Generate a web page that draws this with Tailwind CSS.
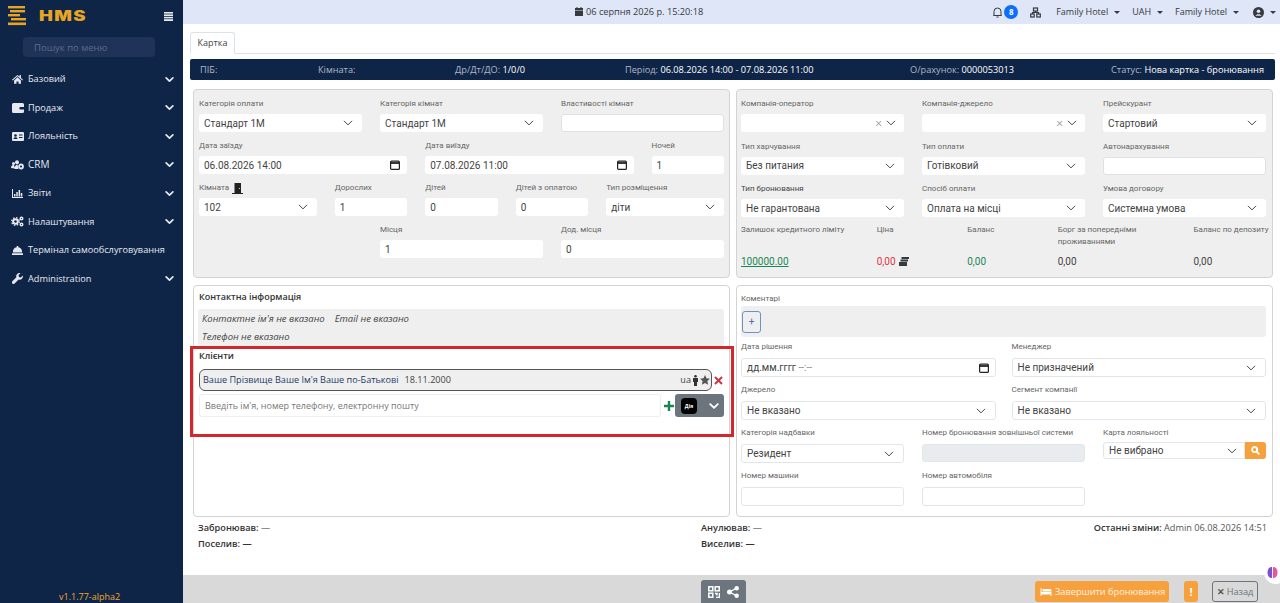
<!DOCTYPE html>
<html lang="uk"><head><meta charset="utf-8"><title>HMS</title>
<script src="https://cdn.jsdelivr.net/npm/@tailwindcss/browser@4"></script></head>
<body class="font-['Open_Sans',sans-serif] bg-white text-[#444]">
<div class="relative flex h-[603px] w-[1280px] overflow-hidden">
<aside class="w-[183px] shrink-0 bg-[#0f2548] text-[#e6e9ef] flex flex-col">
  <div class="h-[32px] flex items-center pl-[8px] pr-[10px]">
    <svg class="w-[18px] h-[20px]" viewBox="0 0 18 20" fill="#e8a524"><rect x="0" y="0" width="17" height="2.4"/><rect x="2" y="4" width="15" height="2.4"/><rect x="0" y="8" width="12" height="2.4"/><rect x="3" y="12" width="15" height="2.4"/><rect x="0" y="16.5" width="18" height="2.6"/></svg>
    <span class="ml-[13px] inline-block origin-left scale-x-[1.32] text-[14px] leading-none font-black tracking-[1px] text-[#e8a524] font-['Inter',sans-serif]">HMS</span>
    <svg class="ml-auto w-[9px] h-[9px]" viewBox="0 0 9 9" fill="#e6e9ef"><rect width="9" height="1.6"/><rect y="2.4" width="9" height="1.6"/><rect y="4.8" width="9" height="1.6"/><rect y="7.2" width="9" height="1.8"/></svg>
  </div>
  <div class="mt-[5px] ml-[23px] w-[132px] h-[20px] rounded-[4px] bg-[#1f3358] pl-[11px] text-[9.500px] leading-[22px] text-[#5d6c88]">Пошук по меню</div>
  <nav class="mt-[8px] flex flex-col text-[9.200px]">
    <div class="h-[28.5px] flex items-center pl-[12px] pr-[9px] gap-[5px]"><svg class="w-[11px] h-[10px]" viewBox="0 0 16 14" fill="#e6e9ef"><path d="M8 1 0 8l1 1 7-6 7 6 1-1-3-2.6V1h-2v2.700zM3 9l5-4.400L13 9v5H9.500v-3.500h-3V14H3z"/></svg><span>Базовий</span><svg class="ml-auto w-[9px] h-[9px]" viewBox="0 0 16 16" fill="none" stroke="#e6e9ef" stroke-width="3" stroke-linecap="round" stroke-linejoin="round"><path d="m2 5 6 6 6-6"/></svg></div>
    <div class="h-[28.5px] flex items-center pl-[12px] pr-[9px] gap-[4px]"><svg class="w-[12px] h-[10px]" viewBox="0 0 12 10" fill="#e6e9ef"><path d="M1.500 0h9A1.500 1.500 0 0 1 12 1.500V4H8.500a1.200 1.200 0 0 0 0 2.400H12v2.100A1.500 1.500 0 0 1 10.500 10h-9A1.500 1.500 0 0 1 0 8.500v-7A1.500 1.500 0 0 1 1.500 0z"/></svg><span>Продаж</span><svg class="ml-auto w-[9px] h-[9px]" viewBox="0 0 16 16" fill="none" stroke="#e6e9ef" stroke-width="3" stroke-linecap="round" stroke-linejoin="round"><path d="m2 5 6 6 6-6"/></svg></div>
    <div class="h-[28.5px] flex items-center pl-[12px] pr-[9px] gap-[4px]"><svg class="w-[12px] h-[9px]" viewBox="0 0 12 9" fill="#e6e9ef"><path d="M1 0h10a1 1 0 0 1 1 1v7a1 1 0 0 1-1 1H1a1 1 0 0 1-1-1V1a1 1 0 0 1 1-1z"/><circle cx="3.500" cy="3.500" r="1.300" fill="#0f2548"/><path d="M1.500 7c0-2.500 4-2.500 4 0zM7 2.500h3.500v1H7zM7 5h3.500v1H7z" fill="#0f2548"/></svg><span>Лояльність</span><svg class="ml-auto w-[9px] h-[9px]" viewBox="0 0 16 16" fill="none" stroke="#e6e9ef" stroke-width="3" stroke-linecap="round" stroke-linejoin="round"><path d="m2 5 6 6 6-6"/></svg></div>
    <div class="h-[28.5px] flex items-center pl-[11px] pr-[9px] gap-[4px]"><svg class="w-[13px] h-[10px]" viewBox="0 0 13 10" fill="#e6e9ef"><circle cx="2.500" cy="3.500" r="1.500"/><circle cx="6" cy="2.200" r="2"/><path d="M0 8c0-2.500 1.500-3 3-3l1 3.500zM3.500 9c0-3 1.500-4.500 3-4.500l1 4.500z"/><circle cx="10" cy="6.500" r="2" fill="none" stroke="#e6e9ef" stroke-width="1.800"/></svg><span class="text-[10px]">CRM</span><svg class="ml-auto w-[9px] h-[9px]" viewBox="0 0 16 16" fill="none" stroke="#e6e9ef" stroke-width="3" stroke-linecap="round" stroke-linejoin="round"><path d="m2 5 6 6 6-6"/></svg></div>
    <div class="h-[28.5px] flex items-center pl-[12px] pr-[9px] gap-[5px]"><svg class="w-[11px] h-[9px]" viewBox="0 0 11 9" fill="#e6e9ef"><path d="M0 0h1v8h10v1H0zM2 5h1.500v2.500H2zM4.300 3h1.500v4.500H4.300zM6.600 1h1.500v6.500H6.600zM8.800 4h1.500v3.500H8.800z"/></svg><span>Звіти</span><svg class="ml-auto w-[9px] h-[9px]" viewBox="0 0 16 16" fill="none" stroke="#e6e9ef" stroke-width="3" stroke-linecap="round" stroke-linejoin="round"><path d="m2 5 6 6 6-6"/></svg></div>
    <div class="h-[28.5px] flex items-center pl-[11px] pr-[9px] gap-[4px]"><svg class="w-[13px] h-[11px]" viewBox="0 0 13 11" fill="none" stroke="#e6e9ef"><circle cx="4.500" cy="5.500" r="2.300" stroke-width="2"/><circle cx="4.500" cy="5.500" r="3.800" stroke-width="1.400" stroke-dasharray="1.500 1.500"/><circle cx="10.500" cy="2.500" r="1.300" stroke-width="1.400"/><circle cx="10.500" cy="8.500" r="1.300" stroke-width="1.400"/></svg><span>Налаштування</span><svg class="ml-auto w-[9px] h-[9px]" viewBox="0 0 16 16" fill="none" stroke="#e6e9ef" stroke-width="3" stroke-linecap="round" stroke-linejoin="round"><path d="m2 5 6 6 6-6"/></svg></div>
    <div class="h-[28.5px] flex items-center pl-[12px] gap-[5px]"><svg class="w-[11px] h-[9px]" viewBox="0 0 11 9" fill="#e6e9ef"><path d="M4.700 0h1.600v1.200A4.500 4.500 0 0 1 10 6.500H1a4.500 4.500 0 0 1 3.700-5.300zM0 7.300h11V9H0z"/></svg><span class="whitespace-nowrap">Термінал самообслуговування</span></div>
    <div class="h-[28.5px] flex items-center pl-[12px] pr-[9px] gap-[5px]"><svg class="w-[11px] h-[11px]" viewBox="0 0 11 11" fill="#e6e9ef"><path d="M10.800 2.500 8.900 4.400 6.900 4 6.500 2 8.500.2a3.200 3.200 0 0 0-4.100 4L.4 8.200a1.400 1.400 0 0 0 2.200 2.200l4-4a3.200 3.200 0 0 0 4.200-3.900z"/></svg><span>Administration</span><svg class="ml-auto w-[9px] h-[9px]" viewBox="0 0 16 16" fill="none" stroke="#e6e9ef" stroke-width="3" stroke-linecap="round" stroke-linejoin="round"><path d="m2 5 6 6 6-6"/></svg></div>
  </nav>
  <div class="mt-auto pl-[59px] text-[9px] leading-[12px] text-[#f0a92a]">v1.1.77-alpha2</div>
</aside>

<div class="flex-1 min-w-0 flex flex-col">
  <header class="relative h-[24px] bg-[#dfe6f7] flex items-center text-[9px] text-[#343a40]">
    <div class="absolute left-[392px] flex items-center gap-[3px] text-[9.200px]"><svg class="w-[8px] h-[9px]" viewBox="0 0 8 9" fill="#343a40"><path d="M1.500 0h1v1h3V0h1v1H8v2H0V1h1.500zM0 3.600h8V9H0z"/></svg><span>06 серпня 2026 р. 15:20:18</span></div>
    <div class="ml-auto flex items-center pr-[4px]">
      <svg class="w-[9px] h-[11px]" viewBox="0 0 9 11" fill="none" stroke="#343a40"><path d="M1 8V4.500a3.500 3.500 0 0 1 7 0V8l.5.500H.5zM3.500 10h2"/></svg>
      <span class="ml-[2px] w-[14px] h-[14px] rounded-full bg-[#0d6efd] text-white text-[8px] font-bold leading-[14px] text-center">8</span>
      <svg class="ml-[12px] w-[11px] h-[11px]" viewBox="0 0 11 11" fill="none" stroke="#343a40" stroke-width="1.200"><rect x="3.500" y="1" width="4" height="3"/><rect x=".7" y="7" width="3.500" height="3"/><rect x="6.800" y="7" width="3.500" height="3"/><path d="M5.500 4v1.500h-3V7M5.500 5.500h3V7"/></svg>
      <span class="ml-[15px]">Family Hotel</span><span class="ml-[6px] border-x-[3px] border-x-transparent border-t-[3.500px] border-t-[#343a40]"></span>
      <span class="ml-[12px]">UAH</span><span class="ml-[6px] border-x-[3px] border-x-transparent border-t-[3.500px] border-t-[#343a40]"></span>
      <span class="ml-[12px]">Family Hotel</span><span class="ml-[6px] border-x-[3px] border-x-transparent border-t-[3.500px] border-t-[#343a40]"></span>
      <svg class="ml-[14px] w-[11px] h-[11px]" viewBox="0 0 11 11"><circle cx="5.500" cy="5.500" r="5.500" fill="#343a40"/><circle cx="5.500" cy="4.200" r="1.800" fill="#dfe6f7"/><path d="M2.500 8.700c1-2 5-2 6 0z" fill="#dfe6f7"/></svg>
      <span class="ml-[6px] border-x-[3px] border-x-transparent border-t-[3.500px] border-t-[#343a40]"></span>
    </div>
  </header>

  <main class="flex-1 min-h-0 flex flex-col pl-[7px] pr-[5px]">
    <div class="mt-[8px] h-[22px] border-b border-[#dee2e6] flex">
      <div class="w-[45px] h-[22px] border border-b-white border-[#dee2e6] rounded-t-[3px] bg-white text-center text-[9px] leading-[20px]">Картка</div>
    </div>
    <div class="mt-[5px] h-[21px] rounded-[2px] bg-[#0f2548] text-[#aeb7c6] text-[9.200px] flex items-center pl-[10px] pr-[11px] whitespace-nowrap">
      <span class="w-[118px]">ПІБ:</span><span class="w-[137px]">Кімната:</span><span class="w-[170px]">Др/Дт/ДО: <b class="font-normal text-white">1/0/0</b></span><span class="w-[285px]">Період: <b class="font-normal text-white">06.08.2026 14:00 - 07.08.2026 11:00</b></span><span>О/рахунок: <b class="font-normal text-white">0000053013</b></span><span class="ml-auto">Статус: <b class="font-normal text-white">Нова картка - бронювання</b></span>
    </div>

    <div class="mt-[9px] pl-[3px] pr-[2px] grid grid-cols-[537px_537px] gap-x-[6px] gap-y-[7px]">
      <section class="h-[189px] rounded-[4px] border border-[#d3d3d3] bg-[#efefef] pt-[8px] px-[5px] grid grid-cols-12 gap-x-[18px] gap-y-[8px] content-start text-[10px] font-['Roboto',sans-serif]">
        <div class="col-span-4"><p class="h-[12px] mb-[4px] text-[8px] leading-[12px] text-[#666]">Категорія оплати</p><div class="h-[18px] rounded-[3px] bg-white flex items-center justify-between pl-[5px] pr-[9px]">Стандарт 1М<svg class="w-[10px] h-[10px]" viewBox="0 0 16 16" fill="none" stroke="#343a40" stroke-width="1.500" stroke-linecap="round" stroke-linejoin="round"><path d="m2 5 6 6 6-6"/></svg></div></div>
        <div class="col-span-4"><p class="h-[12px] mb-[4px] text-[8px] leading-[12px] text-[#666]">Категорія кімнат</p><div class="h-[18px] rounded-[3px] bg-white flex items-center justify-between pl-[5px] pr-[9px]">Стандарт 1М<svg class="w-[10px] h-[10px]" viewBox="0 0 16 16" fill="none" stroke="#343a40" stroke-width="1.500" stroke-linecap="round" stroke-linejoin="round"><path d="m2 5 6 6 6-6"/></svg></div></div>
        <div class="col-span-4"><p class="h-[12px] mb-[4px] text-[8px] leading-[12px] text-[#666]">Властивості кімнат</p><div class="h-[18px] rounded-[3px] bg-white border border-[#dee2e6]"></div></div>

        <div class="col-span-5"><p class="h-[12px] mb-[4px] text-[8px] leading-[12px] text-[#666]">Дата заїзду</p><div class="h-[18px] rounded-[3px] bg-white flex items-center justify-between pl-[5px] pr-[7px]">06.08.2026 14:00<svg class="w-[10px] h-[10px]" viewBox="0 0 10 10" fill="none" stroke="#222" stroke-width="1.200"><rect x=".6" y="1.200" width="8.800" height="8.200" rx="1"/><path d="M.6 3h8.800" stroke-width="1.800"/></svg></div></div>
        <div class="col-span-5"><p class="h-[12px] mb-[4px] text-[8px] leading-[12px] text-[#666]">Дата виїзду</p><div class="h-[18px] rounded-[3px] bg-white flex items-center justify-between pl-[5px] pr-[7px]">07.08.2026 11:00<svg class="w-[10px] h-[10px]" viewBox="0 0 10 10" fill="none" stroke="#222" stroke-width="1.200"><rect x=".6" y="1.200" width="8.800" height="8.200" rx="1"/><path d="M.6 3h8.800" stroke-width="1.800"/></svg></div></div>
        <div class="col-span-2"><p class="h-[12px] mb-[4px] text-[8px] leading-[12px] text-[#666]">Ночей</p><div class="h-[18px] rounded-[3px] bg-white flex items-center pl-[5px]">1</div></div>

        <div class="col-span-3"><p class="h-[12px] mb-[4px] text-[8px] leading-[12px] text-[#666] flex items-center gap-[3px]">Кімната<svg class="w-[11px] h-[11px]" viewBox="0 0 11 11" fill="#222"><path d="M2.500 0h6.500v10H2.500zM0 10h11v1H0z"/><circle cx="7.500" cy="5.500" r=".6" fill="#fff"/></svg></p><div class="h-[18px] rounded-[3px] bg-white flex items-center justify-between pl-[5px] pr-[9px]">102<svg class="w-[10px] h-[10px]" viewBox="0 0 16 16" fill="none" stroke="#343a40" stroke-width="1.500" stroke-linecap="round" stroke-linejoin="round"><path d="m2 5 6 6 6-6"/></svg></div></div>
        <div class="col-span-2"><p class="h-[12px] mb-[4px] text-[8px] leading-[12px] text-[#666]">Дорослих</p><div class="h-[18px] rounded-[3px] bg-white flex items-center pl-[5px]">1</div></div>
        <div class="col-span-2"><p class="h-[12px] mb-[4px] text-[8px] leading-[12px] text-[#666]">Дітей</p><div class="h-[18px] rounded-[3px] bg-white flex items-center pl-[5px]">0</div></div>
        <div class="col-span-2"><p class="h-[12px] mb-[4px] text-[8px] leading-[12px] text-[#666] whitespace-nowrap">Дітей з оплатою</p><div class="h-[18px] rounded-[3px] bg-white flex items-center pl-[5px]">0</div></div>
        <div class="col-span-3"><p class="h-[12px] mb-[4px] text-[8px] leading-[12px] text-[#666]">Тип розміщення</p><div class="h-[18px] rounded-[3px] bg-white flex items-center justify-between pl-[5px] pr-[9px]">діти<svg class="w-[10px] h-[10px]" viewBox="0 0 16 16" fill="none" stroke="#343a40" stroke-width="1.500" stroke-linecap="round" stroke-linejoin="round"><path d="m2 5 6 6 6-6"/></svg></div></div>

        <div class="col-span-4 col-start-5"><p class="h-[12px] mb-[4px] text-[8px] leading-[12px] text-[#666]">Місця</p><div class="h-[18px] rounded-[3px] bg-white flex items-center pl-[5px]">1</div></div>
        <div class="col-span-4"><p class="h-[12px] mb-[4px] text-[8px] leading-[12px] text-[#666]">Дод. місця</p><div class="h-[18px] rounded-[3px] bg-white flex items-center pl-[5px]">0</div></div>
      </section>

      <section class="h-[189px] rounded-[4px] border border-[#d3d3d3] bg-[#efefef] pt-[8px] pl-[4px] pr-[6px] grid grid-cols-12 gap-x-[18px] gap-y-[8.500px] content-start text-[10px] font-['Roboto',sans-serif]">
        <div class="col-span-4"><p class="h-[12px] mb-[4px] text-[8px] leading-[12px] text-[#666]">Компанія-оператор</p><div class="h-[18px] rounded-[3px] bg-white flex items-center justify-end gap-[4px] pr-[8px] text-[#999] text-[13px] font-light">×<svg class="w-[10px] h-[10px]" viewBox="0 0 16 16" fill="none" stroke="#343a40" stroke-width="1.500" stroke-linecap="round" stroke-linejoin="round"><path d="m2 5 6 6 6-6"/></svg></div></div>
        <div class="col-span-4"><p class="h-[12px] mb-[4px] text-[8px] leading-[12px] text-[#666]">Компанія-джерело</p><div class="h-[18px] rounded-[3px] bg-white flex items-center justify-end gap-[4px] pr-[8px] text-[#999] text-[13px] font-light">×<svg class="w-[10px] h-[10px]" viewBox="0 0 16 16" fill="none" stroke="#343a40" stroke-width="1.500" stroke-linecap="round" stroke-linejoin="round"><path d="m2 5 6 6 6-6"/></svg></div></div>
        <div class="col-span-4"><p class="h-[12px] mb-[4px] text-[8px] leading-[12px] text-[#666]">Прейскурант</p><div class="h-[18px] rounded-[3px] bg-white flex items-center justify-between pl-[5px] pr-[9px]">Стартовий<svg class="w-[10px] h-[10px]" viewBox="0 0 16 16" fill="none" stroke="#343a40" stroke-width="1.500" stroke-linecap="round" stroke-linejoin="round"><path d="m2 5 6 6 6-6"/></svg></div></div>

        <div class="col-span-4"><p class="h-[12px] mb-[4px] text-[8px] leading-[12px] text-[#666]">Тип харчування</p><div class="h-[18px] rounded-[3px] bg-white flex items-center justify-between pl-[5px] pr-[9px]">Без питания<svg class="w-[10px] h-[10px]" viewBox="0 0 16 16" fill="none" stroke="#343a40" stroke-width="1.500" stroke-linecap="round" stroke-linejoin="round"><path d="m2 5 6 6 6-6"/></svg></div></div>
        <div class="col-span-4"><p class="h-[12px] mb-[4px] text-[8px] leading-[12px] text-[#666]">Тип оплати</p><div class="h-[18px] rounded-[3px] bg-white flex items-center justify-between pl-[5px] pr-[9px]">Готівковий<svg class="w-[10px] h-[10px]" viewBox="0 0 16 16" fill="none" stroke="#343a40" stroke-width="1.500" stroke-linecap="round" stroke-linejoin="round"><path d="m2 5 6 6 6-6"/></svg></div></div>
        <div class="col-span-4"><p class="h-[12px] mb-[4px] text-[8px] leading-[12px] text-[#666]">Автонарахування</p><div class="h-[18px] rounded-[3px] bg-white border border-[#dee2e6]"></div></div>

        <div class="col-span-4"><p class="h-[12px] mb-[4px] text-[8px] leading-[12px] text-[#444]">Тип бронювання</p><div class="h-[18px] rounded-[3px] bg-white flex items-center justify-between pl-[5px] pr-[9px]">Не гарантована<svg class="w-[10px] h-[10px]" viewBox="0 0 16 16" fill="none" stroke="#343a40" stroke-width="1.500" stroke-linecap="round" stroke-linejoin="round"><path d="m2 5 6 6 6-6"/></svg></div></div>
        <div class="col-span-4"><p class="h-[12px] mb-[4px] text-[8px] leading-[12px] text-[#666]">Спосіб оплати</p><div class="h-[18px] rounded-[3px] bg-white flex items-center justify-between pl-[5px] pr-[9px]">Оплата на місці<svg class="w-[10px] h-[10px]" viewBox="0 0 16 16" fill="none" stroke="#343a40" stroke-width="1.500" stroke-linecap="round" stroke-linejoin="round"><path d="m2 5 6 6 6-6"/></svg></div></div>
        <div class="col-span-4"><p class="h-[12px] mb-[4px] text-[8px] leading-[12px] text-[#666]">Умова договору</p><div class="h-[18px] rounded-[3px] bg-white flex items-center justify-between pl-[5px] pr-[9px]">Системна умова<svg class="w-[10px] h-[10px]" viewBox="0 0 16 16" fill="none" stroke="#343a40" stroke-width="1.500" stroke-linecap="round" stroke-linejoin="round"><path d="m2 5 6 6 6-6"/></svg></div></div>

        <div class="col-span-3 -mt-[2px] text-[#666] text-[8px] leading-[12px] h-[44px] flex flex-col justify-between"><p class="whitespace-nowrap">Залишок кредитного ліміту</p><a class="text-[10px] text-[#198754] underline">100000.00</a></div>
        <div class="col-span-2 -mt-[2px] text-[#666] text-[8px] leading-[12px] h-[44px] flex flex-col justify-between"><p>Ціна</p><span class="text-[10px] text-[#dc3545] flex items-center gap-[3px]">0,00<svg class="w-[10px] h-[9px]" viewBox="0 0 10 9" fill="#343a40"><path d="M2.500 0H10v2H2.500zM1.500 2.500H9v2H1.500zM0 5h8v4H0z"/></svg></span></div>
        <div class="col-span-2 -mt-[2px] text-[#666] text-[8px] leading-[12px] h-[44px] flex flex-col justify-between"><p>Баланс</p><span class="text-[10px] text-[#198754]">0,00</span></div>
        <div class="col-span-3 -mt-[2px] text-[#666] text-[8px] leading-[12px] h-[44px] flex flex-col justify-between"><p>Борг за попередніми проживаннями</p><span class="text-[10px] text-[#444]">0,00</span></div>
        <div class="col-span-2 -mt-[2px] text-[#666] text-[8px] leading-[12px] h-[44px] flex flex-col justify-between"><p class="whitespace-nowrap">Баланс по депозиту</p><span class="text-[10px] text-[#444]">0,00</span></div>
      </section>

      <section class="h-[232px] rounded-[4px] border border-[#d3d3d3] bg-white pt-[3px] px-[5px] text-[10px]">
        <h3 class="h-[15px] leading-[15px] font-semibold text-[#333] text-[9px]">Контактна інформація</h3>
        <div class="mt-[5px] h-[37px] -ml-[1px] rounded-[3px] bg-[#efefef] pl-[4px] italic text-[#444] text-[9.500px] leading-[18px] pt-[1px]"><p><span>Контактне ім'я не вказано</span><span class="ml-[10px]">Email не вказано</span></p><p>Телефон не вказано</p></div>
        <h3 class="mt-[3px] h-[14px] leading-[14px] font-semibold text-[#333] text-[9px]">Клієнти</h3>
        <div class="mt-[6px] flex items-center">
          <div class="w-[513px] h-[22px] rounded-[6px] border border-[#555] bg-[#efefef] flex items-center pl-[3px] pr-[1px] text-[9.100px]"><span class="text-[#1d3a66]">Ваше Прізвище Ваше Ім'я Ваше по-Батькові</span><span class="ml-[6px]">18.11.2000</span><span class="ml-auto">ua</span>
            <svg class="ml-[2px] w-[5px] h-[11px]" viewBox="0 0 5 11" fill="#333"><circle cx="2.500" cy="1.300" r="1.300"/><path d="M0 3h5v4H4v4H1V7H0z"/></svg>
            <svg class="ml-[2px] w-[10px] h-[10px]" viewBox="0 0 10 10" fill="#555"><path d="m5 0 1.500 3.300 3.500.4-2.600 2.400.7 3.600L5 8 1.900 9.700l.7-3.600L0 3.700l3.500-.4z"/></svg>
          </div>
          <svg class="ml-[2px] w-[9px] h-[9px]" viewBox="0 0 9 9" stroke="#c9374a" stroke-width="2"><path d="m1 1 7 7M8 1 1 8"/></svg>
        </div>
        <div class="mt-[3px] flex items-center">
          <div class="w-[462px] h-[23px] rounded-[3px] border border-[#eceef0] pl-[5px] flex items-center text-[9px] text-[#777]">Введіть ім'я, номер телефону, електронну пошту</div>
          <svg class="ml-[3px] w-[10px] h-[10px]" viewBox="0 0 10 10" stroke="#198754" stroke-width="2.400"><path d="M5 0v10M0 5h10"/></svg>
          <div class="ml-[1px] w-[49px] h-[23px] rounded-[3px] bg-[#6c757d] flex items-center pl-[6px] pr-[5px] justify-between"><span class="w-[16px] h-[16px] rounded-[4px] bg-black text-white text-[5px] font-bold leading-[16px] text-center">Дія</span><svg class="w-[10px] h-[10px]" viewBox="0 0 16 16" fill="none" stroke="#fff" stroke-width="3" stroke-linecap="round" stroke-linejoin="round"><path d="m2 5 6 6 6-6"/></svg></div>
        </div>
      </section>

      <section class="h-[232px] rounded-[4px] border border-[#d3d3d3] bg-white pt-[7px] pl-[4px] pr-[6px] text-[10px] font-['Roboto',sans-serif]">
        <p class="h-[12px] mb-[1px] text-[8px] leading-[12px] text-[#666]">Коментарі</p>
        <div class="h-[31px] rounded-[3px] bg-[#efefef] pl-[1px] flex items-center"><span class="w-[19px] h-[22px] rounded-[3px] border border-[#6f8fc9] text-[#4f6ea5] text-[10px] leading-[20px] text-center">+</span></div>
        <div class="mt-[4px] grid grid-cols-2 gap-x-[16px] gap-y-[7px]">
          <div><p class="h-[12px] mb-[5px] text-[8px] leading-[12px] text-[#666]">Дата рішення</p><div class="h-[19px] rounded-[3px] border border-[#e3e6e9] flex items-center justify-between pl-[5px] pr-[6px]"><span>дд.мм.гггг <span class="text-[#888]">--:--</span></span><svg class="w-[10px] h-[10px]" viewBox="0 0 10 10" fill="none" stroke="#222" stroke-width="1.200"><rect x=".6" y="1.200" width="8.800" height="8.200" rx="1"/><path d="M.6 3h8.800" stroke-width="1.800"/></svg></div></div>
          <div><p class="h-[12px] mb-[5px] text-[8px] leading-[12px] text-[#666]">Менеджер</p><div class="h-[19px] rounded-[3px] border border-[#e3e6e9] flex items-center justify-between pl-[5px] pr-[9px]">Не призначений<svg class="w-[10px] h-[10px]" viewBox="0 0 16 16" fill="none" stroke="#343a40" stroke-width="1.500" stroke-linecap="round" stroke-linejoin="round"><path d="m2 5 6 6 6-6"/></svg></div></div>
          <div><p class="h-[12px] mb-[5px] text-[8px] leading-[12px] text-[#666]">Джерело</p><div class="h-[19px] rounded-[3px] border border-[#e3e6e9] flex items-center justify-between pl-[5px] pr-[9px]">Не вказано<svg class="w-[10px] h-[10px]" viewBox="0 0 16 16" fill="none" stroke="#343a40" stroke-width="1.500" stroke-linecap="round" stroke-linejoin="round"><path d="m2 5 6 6 6-6"/></svg></div></div>
          <div><p class="h-[12px] mb-[5px] text-[8px] leading-[12px] text-[#666]">Сегмент компанії</p><div class="h-[19px] rounded-[3px] border border-[#e3e6e9] flex items-center justify-between pl-[5px] pr-[9px]">Не вказано<svg class="w-[10px] h-[10px]" viewBox="0 0 16 16" fill="none" stroke="#343a40" stroke-width="1.500" stroke-linecap="round" stroke-linejoin="round"><path d="m2 5 6 6 6-6"/></svg></div></div>
        </div>
        <div class="mt-[7px] grid grid-cols-3 gap-x-[18px] gap-y-[7px]">
          <div><p class="h-[12px] mb-[5px] text-[8px] leading-[12px] text-[#666]">Категорія надбавки</p><div class="h-[19px] rounded-[3px] border border-[#e3e6e9] flex items-center justify-between pl-[5px] pr-[9px]">Резидент<svg class="w-[10px] h-[10px]" viewBox="0 0 16 16" fill="none" stroke="#343a40" stroke-width="1.500" stroke-linecap="round" stroke-linejoin="round"><path d="m2 5 6 6 6-6"/></svg></div></div>
          <div><p class="h-[12px] mb-[5px] text-[8px] leading-[12px] text-[#666] whitespace-nowrap">Номер бронювання зовнішньої системи</p><div class="h-[18px] rounded-[3px] bg-[#e9ecef] border border-[#e3e6e9]"></div></div>
          <div><p class="h-[12px] mb-[3px] text-[8px] leading-[12px] text-[#666]">Карта лояльності</p><div class="flex h-[17px]"><div class="flex-1 rounded-l-[3px] border border-[#e3e6e9] flex items-center justify-between pl-[5px] pr-[7px]">Не вибрано<svg class="w-[10px] h-[10px]" viewBox="0 0 16 16" fill="none" stroke="#343a40" stroke-width="1.500" stroke-linecap="round" stroke-linejoin="round"><path d="m2 5 6 6 6-6"/></svg></div><span class="w-[21px] rounded-r-[3px] bg-[#f7a13e] flex items-center justify-center"><svg class="w-[9px] h-[9px]" viewBox="0 0 9 9" fill="none" stroke="#fff" stroke-width="1.800"><circle cx="3.600" cy="3.600" r="2.600"/><path d="m5.500 5.500 3 3"/></svg></span></div></div>
          <div><p class="h-[12px] mb-[5px] text-[8px] leading-[12px] text-[#666]">Номер машини</p><div class="h-[19px] rounded-[3px] border border-[#e3e6e9]"></div></div>
          <div><p class="h-[12px] mb-[5px] text-[8px] leading-[12px] text-[#666]">Номер автомобіля</p><div class="h-[19px] rounded-[3px] border border-[#e3e6e9]"></div></div>
        </div>
      </section>
    </div>

    <div class="mt-[3px] pl-[8px] pr-[8px] grid grid-cols-[503px_1fr_auto] text-[9.200px] leading-[16px] text-[#333]">
      <p><b class="font-semibold">Забронював:</b> —</p><p><b class="font-semibold">Анулював:</b> —</p><p class="text-right"><b class="font-semibold">Останні зміни:</b> <span class="text-[#555]">Admin 06.08.2026 14:51</span></p>
      <p class="font-semibold">Поселив: —</p><p class="font-semibold">Виселив: —</p>
    </div>
  </main>

  <footer class="h-[28px] shrink-0 bg-[#d9d9d9] flex items-end text-[9.200px]">
    <div class="ml-[518px] w-[45px] h-[23px] rounded-t-[3px] bg-[#6c757d] flex items-center justify-center gap-[7px]">
      <svg class="w-[12px] h-[12px]" viewBox="0 0 12 12" fill="none" stroke="#fff" stroke-width="1.500"><rect x=".8" y=".8" width="4" height="4"/><rect x="7.200" y=".8" width="4" height="4"/><rect x=".8" y="7.200" width="4" height="4"/><path d="M7 7.500h2v2M11.500 7v4.500H8"/></svg>
      <svg class="w-[12px] h-[12px]" viewBox="0 0 12 12" fill="#fff"><circle cx="2.500" cy="6" r="2.500"/><circle cx="9.700" cy="2.200" r="2.200"/><circle cx="9.700" cy="9.800" r="2.200"/><path d="M2.500 6 9.700 2.200M2.500 6l7.200 3.800" stroke="#fff" stroke-width="1.400"/></svg>
    </div>
    <div class="ml-[289px] mb-[1px] w-[134px] h-[21px] rounded-[3px] bg-[#f7a13e] text-[#fff3e3] flex items-center pl-[5px] gap-[3px]"><svg class="w-[12px] h-[8px]" viewBox="0 0 11 8" fill="#fff"><path d="M0 0h1v4h10v4h-1V6.500H1V8H0zM2 1h7.500A1.500 1.500 0 0 1 11 2.500v1H2z"/></svg><span>Завершити бронювання</span></div>
    <div class="ml-[15px] mb-[1px] w-[14px] h-[21px] rounded-[3px] bg-[#f7a13e] text-white font-bold text-center leading-[21px] text-[11px]">!</div>
    <div class="ml-[14px] mb-[1px] w-[46px] h-[21px] rounded-[3px] border border-[#6c757d] text-[#6c757d] flex items-center justify-center gap-[2px]"><span class="font-bold text-[#555]">✕</span>Назад</div>
  </footer>
</div>

<div class="absolute left-[190px] top-[346px] w-[544px] h-[91px] border-[3px] border-[#d0282c] pointer-events-none"></div>
<div class="absolute right-[-8px] top-[560px] w-[24px] h-[24px] rounded-full bg-white flex items-center pl-[3px]"><svg class="w-[11px] h-[13px]" viewBox="0 0 11 13"><path d="M5 1C2 1 .5 3 .5 6.500S2 12 5 12z" fill="#7c4fd6"/><path d="M6 1c3 0 4.500 2 4.500 5.500S9 12 6 12z" fill="#e8559b"/></svg></div>
</div>
</body></html>
